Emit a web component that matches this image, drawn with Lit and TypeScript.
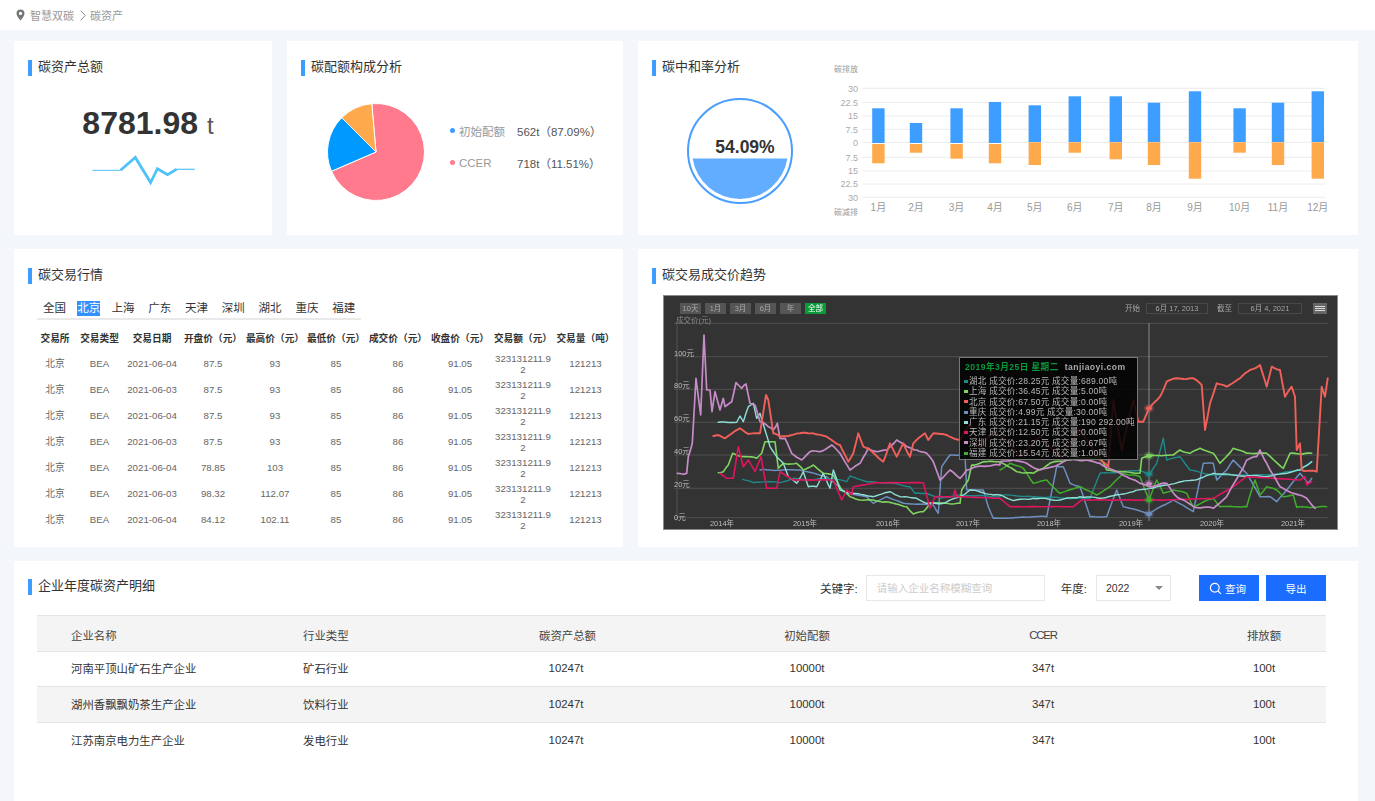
import { LitElement, html, css, svg } from "lit";
import { customElement } from "lit/decorators.js";

type P = [number, number];
const organic = (raw: number[][], amp: number, seed: number) => {
  const out: { x: number; y: number; v: boolean }[] = [];
  for (let i = 0; i < raw.length - 1; i++) {
    const [x0, y0] = raw[i];
    const [x1, y1] = raw[i + 1];
    const n = Math.max(1, Math.round(Math.abs(x1 - x0) / 2.5));
    for (let k = 0; k < n; k++) {
      const t = k / n;
      const x = x0 + (x1 - x0) * t;
      const noise = Math.sin(x * 0.9 + seed) * 0.6 + Math.sin(x * 2.3 + seed * 2) * 0.4 + Math.sin(x * 0.27 + seed * 3) * 0.7;
      out.push({ x, y: y0 + (y1 - y0) * t + (k === 0 ? 0 : noise * amp), v: k === 0 });
    }
  }
  const last = raw[raw.length - 1];
  out.push({ x: last[0], y: last[1], v: true });
  return out.map((p, i) =>
    p.v || i === 0 || i === out.length - 1 ? [p.x, p.y] : [p.x, (out[i - 1].y + 2 * p.y + out[i + 1].y) / 4]
  );
};
const conv = (l: P[], r: P[], amp = 1, seed = 1) =>
  organic([...l.map(([x, y]) => [660 + x / 3, 290 + y / 3]), ...r.map(([x, y]) => [1000 + x / 3, 290 + y / 3])], amp, seed)
    .map((p) => p[0].toFixed(1) + "," + p[1].toFixed(1))
    .join(" ");

const SERIES: { c: string; w: number; pts: string }[] = [
  { c: "#6d8fbf", w: 1.5, pts: conv(
    [[300,540],[420,540],[500,560],[560,610],[620,620],[640,640],[680,620],[730,640],[820,645],[835,670],[845,530],[870,495],[915,495],[920,600],[970,600],[985,650],[1000,685],[1020,685]],
    [[0,685],[100,680],[140,680],[170,530],[190,530],[210,580],[240,590],[270,680],[320,680],[350,600],[370,650],[447,670],[520,630],[580,665],[610,520],[640,520],[650,570],[680,540],[700,510],[740,550],[780,620],[810,620],[830,635],[860,600],[900,550],[925,580],[935,565]], 0.4, 2) },
  { c: "#1f8a8a", w: 1.4, pts: conv(
    [[248,568],[280,578],[320,575],[360,578],[400,565],[440,570],[520,565],[560,575],[570,558],[620,575],[700,580],[750,590],[765,610],[800,610],[840,625],[900,615],[1020,620]],
    [[0,615],[100,620],[200,625],[270,625],[300,550],[370,545],[420,540],[447,555],[470,520],[490,445],[500,510],[540,500],[570,540],[640,555],[800,555],[900,540],[935,515]], 0.5, 3) },
  { c: "#3fae2a", w: 1.5, pts: conv([],
    [[0,540],[30,520],[70,535],[100,580],[140,570],[180,610],[240,590],[290,615],[330,590],[370,550],[420,560],[447,630],[470,570],[490,610],[520,600],[560,610],[580,650],[640,625],[660,650],[740,650],[765,570],[780,615],[800,590],[830,600],[850,620],[880,615],[890,652],[980,650]], 0.6, 4) },
  { c: "#7fd460", w: 1.6, pts: conv(
    [[175,548],[190,545],[205,525],[218,490],[235,497],[290,505],[305,490],[315,455],[345,455],[355,535],[370,520],[410,520],[430,540],[460,525],[490,550],[520,555],[545,600],[570,620],[600,630],[640,630],[700,640],[740,650],[760,672],[790,665],[810,640],[860,640],[900,640],[905,600],[925,570],[935,525],[980,515],[1020,515]],
    [[0,515],[50,545],[100,550],[150,520],[200,510],[300,500],[320,540],[420,550],[425,505],[447,497],[520,495],[540,480],[570,490],[600,475],[640,490],[660,520],[700,475],[740,490],[800,490],[850,535],[870,490],[935,490]], 0.8, 5) },
  { c: "#8fe0d8", w: 1.4, pts: conv(
    [[175,397],[230,397],[240,378],[250,395],[265,350],[280,340],[290,385],[300,370],[315,420],[330,470],[350,500],[370,520],[385,560],[410,580],[430,545],[445,590],[470,590],[490,550],[510,595],[520,540],[540,600],[580,610],[640,620],[690,605],[720,620],[770,625],[800,640],[850,640],[900,620],[930,600],[1000,615]],
    [[0,615],[40,632],[100,625],[180,630],[240,620],[300,625],[400,605],[447,595],[500,585],[600,565],[640,550],[700,555],[800,560],[900,540],[935,515]], 0.7, 6) },
  { c: "#e0145f", w: 1.6, pts: conv(
    [[180,550],[200,565],[220,565],[235,470],[250,530],[265,510],[285,545],[303,500],[320,595],[350,595],[360,545],[400,570],[520,570],[545,630],[560,600],[575,615],[580,590],[650,578],[790,578],[810,655],[825,620],[880,620],[885,600],[890,620],[1020,625]],
    [[0,625],[30,650],[220,650],[245,630],[500,630],[640,625],[700,590],[740,560],[900,570],[915,560],[920,585],[935,575]], 0.15, 7) },
  { c: "#c78bc8", w: 1.7, pts: conv(
    [[52,550],[80,550],[85,500],[97,460],[108,265],[122,375],[132,135],[140,300],[150,300],[156,365],[165,305],[180,360],[190,325],[195,350],[215,335],[228,278],[245,295],[258,282],[270,340],[285,345],[300,395],[325,410],[340,420],[352,400],[360,445],[375,445],[395,490],[425,510],[450,485],[480,485],[515,465],[540,490],[570,540],[600,520],[625,475],[650,485],[680,480],[710,450],[740,470],[770,480],[800,490],[820,515],[840,570],[870,540],[900,565],[920,540],[950,530],[1020,525]],
    [[0,515],[40,510],[80,520],[120,540],[160,530],[200,510],[260,510],[300,520],[340,540],[380,560],[420,580],[450,590],[500,580],[530,620],[580,650],[640,655],[680,620],[720,550],[740,510],[770,500],[780,480],[800,520],[840,590],[880,610],[920,625],[945,655]], 0.9, 8) },
  { c: "#f0605a", w: 1.9, pts: conv(
    [[160,438],[175,435],[195,445],[240,415],[265,432],[300,430],[318,315],[325,330],[340,430],[360,440],[420,430],[460,430],[500,440],[540,465],[565,515],[580,490],[595,430],[610,470],[630,480],[670,515],[690,460],[710,500],[730,460],[750,500],[760,460],[795,430],[805,450],[820,430],[860,435],[900,450],[930,400],[960,480],[1000,420]],
    [[20,450],[60,500],[120,440],[180,500],[240,420],[300,510],[325,530],[340,330],[365,480],[400,330],[415,395],[430,395],[447,355],[480,320],[500,275],[530,265],[580,265],[605,285],[615,420],[630,340],[650,280],[680,290],[720,265],[750,240],[780,225],[800,290],[815,230],[840,240],[855,320],[875,290],[885,320],[890,480],[900,460],[905,540],[950,545],[965,290],[975,320],[983,265]], 0.8, 9) },
];

const GRID = [323.3, 356.7, 389.3, 422.3, 455, 488.3, 517.7];
const YLABELS = ["100元", "80元", "60元", "40元", "20元", "0元"];
const YEARS: [string, number][] = [["2014年",722],["2015年",805],["2016年",888],["2017年",968],["2018年",1049],["2019年",1131],["2020年",1212],["2021年",1293]];
const MARKS: [number, string][] = [[408.3,"#f0605a"],[455.7,"#7fd460"],[474,"#1f8a8a"],[483.7,"#c78bc8"],[500,"#3fae2a"],[514,"#6d8fbf"]];

const TIP: [string, string, string][] = [
  ["#1f8a8a", "湖北", "成交价:28.25元 成交量:689.00吨"],
  ["#7fd460", "上海", "成交价:36.45元 成交量:5.00吨"],
  ["#f0605a", "北京", "成交价:67.50元 成交量:0.00吨"],
  ["#6d8fbf", "重庆", "成交价:4.99元 成交量:30.00吨"],
  ["#8fe0d8", "广东", "成交价:21.15元 成交量:190 292.00吨"],
  ["#e0145f", "天津", "成交价:12.50元 成交量:0.00吨"],
  ["#c78bc8", "深圳", "成交价:23.20元 成交量:0.67吨"],
  ["#3fae2a", "福建", "成交价:15.54元 成交量:1.00吨"],
];

const BAR_GRID = [88.3, 102.3, 116, 129.3, 142.3, 157.3, 171, 184, 197.3];
const BAR_LABELS = ["30", "22.5", "15", "7.5", "0", "7.5", "15", "22.5", "30"];
const BARS: [number, number, number, number, number, string][] = [
  [878.4, 108.3, 143, 144, 163.3, "1月"], [916, 123, 143, 144, 152.7, "2月"], [956.6, 108.3, 143, 144, 158.7, "3月"],
  [995, 102, 143, 144, 163.3, "4月"], [1034.8, 105.3, 142, 142.3, 165, "5月"], [1074.8, 96.3, 142, 142.3, 152.7, "6月"],
  [1115.8, 96.3, 142, 142.3, 159.3, "7月"], [1154, 102.7, 142, 142.3, 165, "8月"], [1195, 91.3, 142, 142.3, 178.7, "9月"],
  [1239.6, 108.3, 142, 142.3, 152.7, "10月"], [1278, 102.7, 142, 142.3, 165, "11月"], [1317.8, 91.3, 142, 142.3, 178.7, "12月"],
];

const TABS = ["全国", "北京", "上海", "广东", "天津", "深圳", "湖北", "重庆", "福建"];
const TH = ["交易所", "交易类型", "交易日期", "开盘价（元）", "最高价（元）", "最低价（元）", "成交价（元）", "收盘价（元）", "交易额（元）", "交易量（吨）"];
const TR: [string, string, string][] = [
  ["2021-06-04", "87.5", "93"], ["2021-06-03", "87.5", "93"], ["2021-06-04", "87.5", "93"],
  ["2021-06-03", "87.5", "93"], ["2021-06-04", "78.85", "103"], ["2021-06-03", "98.32", "112.07"],
  ["2021-06-04", "84.12", "102.11"],
];
const COMPANIES = [
  ["河南平顶山矿石生产企业", "矿石行业"],
  ["湖州香飘飘奶茶生产企业", "饮料行业"],
  ["江苏南京电力生产企业", "发电行业"],
];

const arc = (a0: number, a1: number, cx = 50, cy = 50, r = 48.5) => {
  const p = (a: number) => [cx + r * Math.sin((a * Math.PI) / 180), cy - r * Math.cos((a * Math.PI) / 180)];
  const [x0, y0] = p(a0);
  const [x1, y1] = p(a1);
  const large = a1 - a0 > 180 ? 1 : 0;
  return `M${cx} ${cy}L${x0.toFixed(2)} ${y0.toFixed(2)}A${r} ${r} 0 ${large} 1 ${x1.toFixed(2)} ${y1.toFixed(2)}Z`;
};

@customElement("app-root")
export class AppRoot extends LitElement {
  static styles = css`
    :host {
      display: flex;
      flex-direction: column;
      height: 801px;
      overflow: hidden;
      background: #f3f6fb;
      font-family: "Liberation Sans", "Noto Sans CJK SC", sans-serif;
      color: #333;
    }
    .crumb {
      height: 30px;
      flex: none;
      background: #fff;
      display: flex;
      align-items: center;
      padding-left: 16px;
      font-size: 11px;
      color: #999;
    }
    .crumb svg { display: block; }
    .crumb .pin { margin-right: 5px; }
    .crumb .chev { margin: 0 4px 0 6px; }
    .main {
      flex: 1;
      min-height: 0;
      display: flex;
      flex-direction: column;
      gap: 14px;
      padding: 11px 17px 0 14px;
    }
    .row { display: flex; gap: 15px; flex: none; }
    .card { background: #fff; box-sizing: border-box; padding: 19px 14px 0; }
    .title {
      height: 16px;
      line-height: 13px;
      border-left: 4px solid #3c9cff;
      padding-left: 6px;
      font-size: 13px;
      color: #333;
      white-space: nowrap;
    }
    .r1 { height: 194px; }
    .r2 { height: 298px; }
    .c-total { width: 258px; }
    .c-pie { width: 336px; }
    .c-rate { width: 720px; display: flex; padding-right: 0; }
    .c-left { width: 609px; }
    .c-right { width: 720px; }
    .c-bottom { flex: 1; padding-top: 18px; }
    .bottom-wrap { flex: 1; min-height: 0; display: flex; }

    .total { display: flex; justify-content: center; align-items: baseline; padding: 29px 0 0 10px; height: 37px; line-height: 37px; }
    .total b { font-size: 32px; font-weight: 700; color: #333; }
    .total span { font-size: 24px; color: #555; margin-left: 9px; }
    .spark { display: block; margin: 12px 0 0 64px; }

    .pie-body { display: flex; align-items: flex-start; padding: 26px 0 0 25px; }
    .pie-body svg { display: block; flex: none; }
    .legend { margin: 21px 0 0 24px; display: flex; flex-direction: column; gap: 17px; font-size: 11.5px; }
    .legend .it { display: flex; align-items: center; height: 15px; white-space: nowrap; }
    .dot { width: 5px; height: 5px; border-radius: 50%; margin-right: 4px; }
    .legend .nm { width: 58px; color: #999; }
    .legend .val { color: #555; }

    .rate-l { width: 187px; flex: none; }
    .gauge { display: block; margin: 22px 0 0 35px; }
    .rate-wrap { margin: -19px 0 0 -14px; flex: none; }
    .rate-chart { display: block; }

    .tabs {
      display: flex;
      gap: 13.8px;
      margin: 17px 0 0 9px;
      padding: 0 0 2px 6px;
      width: 324px;
      box-sizing: border-box;
      border-bottom: 2px solid #e9e9e9;
      font-size: 11.5px;
      line-height: 15px;
      color: #333;
    }
    .tabs span { white-space: nowrap; }
    .tabs span:nth-child(-n + 2) { margin-right: -2.6px; }
    .tabs .on { background: #3390ff; color: #fff; }
    .mkt { margin: 5px 0 0 7px; font-size: 9.7px; }
    .mkt .hd, .mkt .rw { display: grid; grid-template-columns: 40px 49px 56px 66px 58px 64px 60px 64px 62px 63px; height: 26px; align-items: center; text-align: center; }
    .mkt .hd { font-weight: 700; color: #333; white-space: nowrap; }
    .mkt .rw { color: #666; line-height: 11.5px; }
    .mkt .wrap { word-break: break-all; padding: 0 2px; }
    .mkt .hd > div { display: flex; justify-content: center; }

    .c-right .shot {
      position: relative;
      width: 675px;
      height: 235px;
      margin: 11px 0 0 11px;
      box-sizing: border-box;
      border: 1px solid #8a8a8a;
      background: #333;
      filter: blur(0.45px);
      overflow: hidden;
    }
    .tools { display: flex; align-items: flex-start; height: 20px; padding: 7px 10px 0 16px; box-sizing: border-box; font-size: 7.5px; color: #b5b5b5; }
    .tools .btn { width: 21px; height: 11px; line-height: 11px; text-align: center; background: #555; color: #aaa; margin-right: 4px; }
    .tools .btn.on { background: #0a9a3a; color: #fff; }
    .tools .sp { flex: 1; }
    .tools .lbl { line-height: 11px; color: #a5a5a5; margin-right: 6px; }
    .tools .box { width: 62px; height: 11px; line-height: 10px; text-align: center; border: 1px solid #484848; box-sizing: border-box; margin-right: 9px; color: #a5a5a5; }
    .tools .box.w { width: 64px; }
    .tools .menu { width: 14px; height: 11px; margin-left: 2px; background: #666; display: flex; flex-direction: column; justify-content: center; gap: 1px; align-items: center; }
    .tools .menu i { display: block; width: 10px; height: 1px; background: #ddd; }
    .plot { display: block; }
    .tip {
      position: absolute;
      left: 295px;
      top: 61px;
      width: 179px;
      height: 103px;
      box-sizing: border-box;
      border: 1px solid #777;
      background: rgba(0, 0, 0, 0.86);
      padding: 2px 0 0 4px;
      font-size: 8.6px;
      color: #b8b8b8;
      white-space: nowrap;
    }
    .tip .t { height: 14px; line-height: 14px; color: #0a9a3a; font-weight: 700; margin: 0 0 2px 1px; display: flex; gap: 6px; letter-spacing: 0.45px; }
    .tip .t span { color: #aaa; }
    .tip .l { height: 10.3px; line-height: 10.3px; display: flex; align-items: center; gap: 1px; letter-spacing: 0.2px; }
    .tip .l i { display: block; width: 4px; height: 3px; }

    .bottom-head { display: flex; align-items: center; height: 26px; margin: -4px 18px 0 0; font-size: 11.5px; color: #333; }
    .bottom-head .title { flex: 1; align-self: flex-start; margin-top: 4px; }
    .fld { white-space: nowrap; }
    .inp { width: 179px; height: 26px; box-sizing: border-box; border: 1px solid #e8e8e8; margin: 0 16px 0 8px; padding-left: 10px; line-height: 24px; font-size: 10.5px; color: #ccc; white-space: nowrap; }
    .sel { width: 75px; height: 26px; box-sizing: border-box; border: 1px solid #e8e8e8; margin: 0 28px 0 9px; padding: 0 7px 0 9px; display: flex; align-items: center; justify-content: space-between; font-size: 10.5px; color: #333; }
    .sel i { display: block; width: 0; height: 0; border-left: 4px solid transparent; border-right: 4px solid transparent; border-top: 4px solid #888; }
    .b { width: 60px; height: 26px; background: #1a6dff; color: #fff; font-size: 10.5px; display: flex; align-items: center; justify-content: center; gap: 3px; box-sizing: border-box; }
    .b.s { padding-right: 3px; }
    .b + .b { margin-left: 7px; }
    .b svg { display: block; }

    .ent { margin: 14px 18px 0 9px; font-size: 11.4px; }
    .ent .g { display: grid; grid-template-columns: 266px 147px 232px 250px 222px 172px; align-items: center; border-bottom: 1px solid #e5e5e5; box-sizing: border-box; color: #333; }
    .ent .g > div:nth-child(1) { padding-left: 34px; }
    .ent .g > div:nth-child(n + 3) { text-align: center; }
    .ent .g > div:nth-child(6) { padding-left: 48px; }
    .ent .hd { height: 37px; background: #f4f4f4; border-top: 1px solid #e5e5e5; color: #444; padding-top: 2px; }
    .ent .hd > div:nth-child(3) { padding-left: 3px; }
    .ent .hd > div:nth-child(5) { letter-spacing: -1.2px; }
    .ent .rw { height: 35px; padding-bottom: 2px; }
    .ent .rw.h2 { height: 36px; }
    .ent .rw.alt { background: #f4f4f4; }
    .ent .rw.last { height: 36px; border-bottom: none; }
  `;

  private chartPlot() {
    return html`<svg class="plot" width="673" height="213" viewBox="664 316 673 213">
      ${GRID.map((y) => svg`<line x1="674" x2="1328" y1=${y} y2=${y} stroke="#505050" stroke-width="1"/>`)}
      <line x1="677" x2="677" y1="323" y2="521" stroke="#555"/>
      <text x="676" y="323" font-size="7.5" fill="#8a8a8a">成交价(元)</text>
      ${YLABELS.map((t, i) => svg`<text x="674" y=${GRID[i + 1] - 1 + (i === 5 ? 3 : 0)} font-size="7.5" fill="#bdbdbd">${t}</text>`)}
      ${YEARS.map(([t, x]) => svg`<text x=${x} y="526" font-size="7.5" text-anchor="middle" fill="#bdbdbd">${t}</text>`)}
      ${SERIES.map((s) => svg`<polyline points=${s.pts} fill="none" stroke=${s.c} stroke-width=${s.w} stroke-linejoin="round" stroke-linecap="round"/>`)}
      <line x1="1149" x2="1149" y1="323" y2="521" stroke="#8a8a8a"/>
      ${MARKS.map(([y, c]) => svg`<ellipse cx="1149" cy=${y} rx="5" ry="4" fill=${c} opacity=".3"/><ellipse cx="1149" cy=${y} rx="3" ry="2" fill=${c}/>`)}
    </svg>`;
  }

  private barChart() {
    return html`<svg class="rate-chart" width="533" height="194" viewBox="825 41 533 194" font-family="'Liberation Sans','Noto Sans CJK SC',sans-serif">
      <text x="858" y="72" font-size="8" text-anchor="end" fill="#999">碳排放</text>
      <text x="858" y="215" font-size="8" text-anchor="end" fill="#999">碳减排</text>
      ${BAR_GRID.map((y, i) => svg`
        <line x1="862.5" x2="1325" y1=${y} y2=${y} stroke="#ececec"/>
        <text x="858" y=${y + 3.2} font-size="9" text-anchor="end" fill="#aaa">${BAR_LABELS[i]}</text>`)}
      ${BARS.map(([cx, bt, bb, ot, ob, m]) => svg`
        <rect x=${cx - 6.2} y=${bt} width="12.4" height=${bb - bt} fill="#3d9eff"/>
        <rect x=${cx - 6.2} y=${ot} width="12.4" height=${ob - ot} fill="#ffa94d"/>
        <text x=${cx} y="210.5" font-size="10" text-anchor="middle" fill="#999">${m}</text>`)}
    </svg>`;
  }

  render() {
    return html`
      <div class="crumb">
        <svg class="pin" width="9" height="12" viewBox="0 0 9 12"><path d="M4.5 0.5A4 4 0 0 0 .5 4.5C.5 7.2 4.5 11.5 4.5 11.5S8.5 7.2 8.5 4.5A4 4 0 0 0 4.5 .5ZM4.5 6A1.6 1.6 0 1 1 4.5 2.8 1.6 1.6 0 0 1 4.5 6Z" fill="#777" fill-rule="evenodd"/></svg>
        <span>智慧双碳</span>
        <svg class="chev" width="6" height="11" viewBox="0 0 6 11"><path d="M.7 .7L5.2 5.5.7 10.3" fill="none" stroke="#888" stroke-width="1"/></svg>
        <span>碳资产</span>
      </div>
      <div class="main">
        <div class="row r1">
          <div class="card c-total">
            <div class="title">碳资产总额</div>
            <div class="total"><b>8781.98</b><span>t</span></div>
            <svg class="spark" width="110" height="34" viewBox="92 152 110 34">
              <g fill="none" stroke="#4fc3f7" stroke-linejoin="miter">
                <path d="M92.4 168.3H120.5" stroke-width="1"/>
                <path d="M120.5 168.3L135.3 155.5 150.6 180.5 157.4 166.7 167.5 172.7 176.7 167.3" stroke-width="2.8"/>
                <path d="M176.7 167.3H194.8" stroke-width="1.2"/>
              </g>
            </svg>
          </div>
          <div class="card c-pie">
            <div class="title">碳配额构成分析</div>
            <div class="pie-body">
              <svg width="100" height="100" viewBox="0 0 100 100">
                <g stroke="#fff" stroke-width="1">
                  <path d=${arc(-5, 246.6)} fill="#ff7a8c"/>
                  <path d=${arc(246.6, 315)} fill="#0099ff"/>
                  <path d=${arc(315, 355)} fill="#ffa94d"/>
                </g>
              </svg>
              <div class="legend">
                <div class="it"><i class="dot" style="background:#3c9cff"></i><span class="nm">初始配额</span><span class="val">562t（87.09%）</span></div>
                <div class="it"><i class="dot" style="background:#ff7a8c"></i><span class="nm">CCER</span><span class="val">718t（11.51%）</span></div>
              </div>
            </div>
          </div>
          <div class="card c-rate">
            <div class="rate-l">
              <div class="title">碳中和率分析</div>
              <svg class="gauge" width="108" height="108" viewBox="0 0 108 108" font-family="'Liberation Sans','Noto Sans CJK SC',sans-serif">
                <circle cx="53" cy="53" r="52" fill="none" stroke="#4a9eff" stroke-width="2"/>
                <path d="M5.6 60.5H100.4A48 48 0 0 1 5.6 60.5Z" fill="#62adff"/>
                <text x="58" y="55" font-size="17.5" font-weight="700" text-anchor="middle" fill="#333">54.09%</text>
              </svg>
            </div>
            <div class="rate-wrap">${this.barChart()}</div>
          </div>
        </div>
        <div class="row r2">
          <div class="card c-left">
            <div class="title">碳交易行情</div>
            <div class="tabs">
              ${TABS.map((t) => html`<span class=${t === "北京" ? "on" : ""}>${t}</span>`)}
            </div>
            <div class="mkt">
              <div class="hd">${TH.map((t) => html`<div>${t}</div>`)}</div>
              ${TR.map(
                ([d, o, h]) => html`<div class="rw">
                  <div>北京</div><div>BEA</div><div>${d}</div><div>${o}</div><div>${h}</div><div>85</div><div>86</div><div>91.05</div>
                  <div class="wrap">323131211.92</div><div>121213</div>
                </div>`
              )}
            </div>
          </div>
          <div class="card c-right">
            <div class="title">碳交易成交价趋势</div>
            <div class="shot">
              <div class="tools">
                <div class="btn">10天</div><div class="btn">1月</div><div class="btn">3月</div><div class="btn">6月</div><div class="btn">年</div><div class="btn on">全部</div>
                <div class="sp"></div>
                <div class="lbl">开始</div><div class="box">6月 17, 2013</div>
                <div class="lbl">截至</div><div class="box w">6月 4, 2021</div>
                <div class="menu"><i></i><i></i><i></i></div>
              </div>
              ${this.chartPlot()}
              <div class="tip">
                <div class="t">2019年3月25日 星期二<span>tanjiaoyi.com</span></div>
                ${TIP.map(([c, n, v]) => html`<div class="l"><i style="background:${c}"></i>${n} ${v}</div>`)}
              </div>
            </div>
          </div>
        </div>
        <div class="bottom-wrap">
          <div class="card c-bottom">
            <div class="bottom-head">
              <div class="title">企业年度碳资产明细</div>
              <span class="fld">关键字:</span>
              <div class="inp">请输入企业名称模糊查询</div>
              <span class="fld">年度:</span>
              <div class="sel"><span>2022</span><i></i></div>
              <div class="b s">
                <svg width="13" height="13" viewBox="0 0 14 14"><circle cx="6.2" cy="6.2" r="4.7" fill="none" stroke="#fff" stroke-width="1.3"/><path d="M9.7 9.7L12.8 12.8" stroke="#fff" stroke-width="1.3"/></svg>
                <span>查询</span>
              </div>
              <div class="b"><span>导出</span></div>
            </div>
            <div class="ent">
              <div class="g hd"><div>企业名称</div><div>行业类型</div><div>碳资产总额</div><div>初始配额</div><div>CCER</div><div>排放额</div></div>
              ${COMPANIES.map(
                ([a, b], i) => html`<div class="g rw ${i === 1 ? "alt h2" : ""} ${i === 2 ? "last" : ""}">
                  <div>${a}</div><div>${b}</div><div>10247t</div><div>10000t</div><div>347t</div><div>100t</div>
                </div>`
              )}
            </div>
          </div>
        </div>
      </div>
    `;
  }
}
